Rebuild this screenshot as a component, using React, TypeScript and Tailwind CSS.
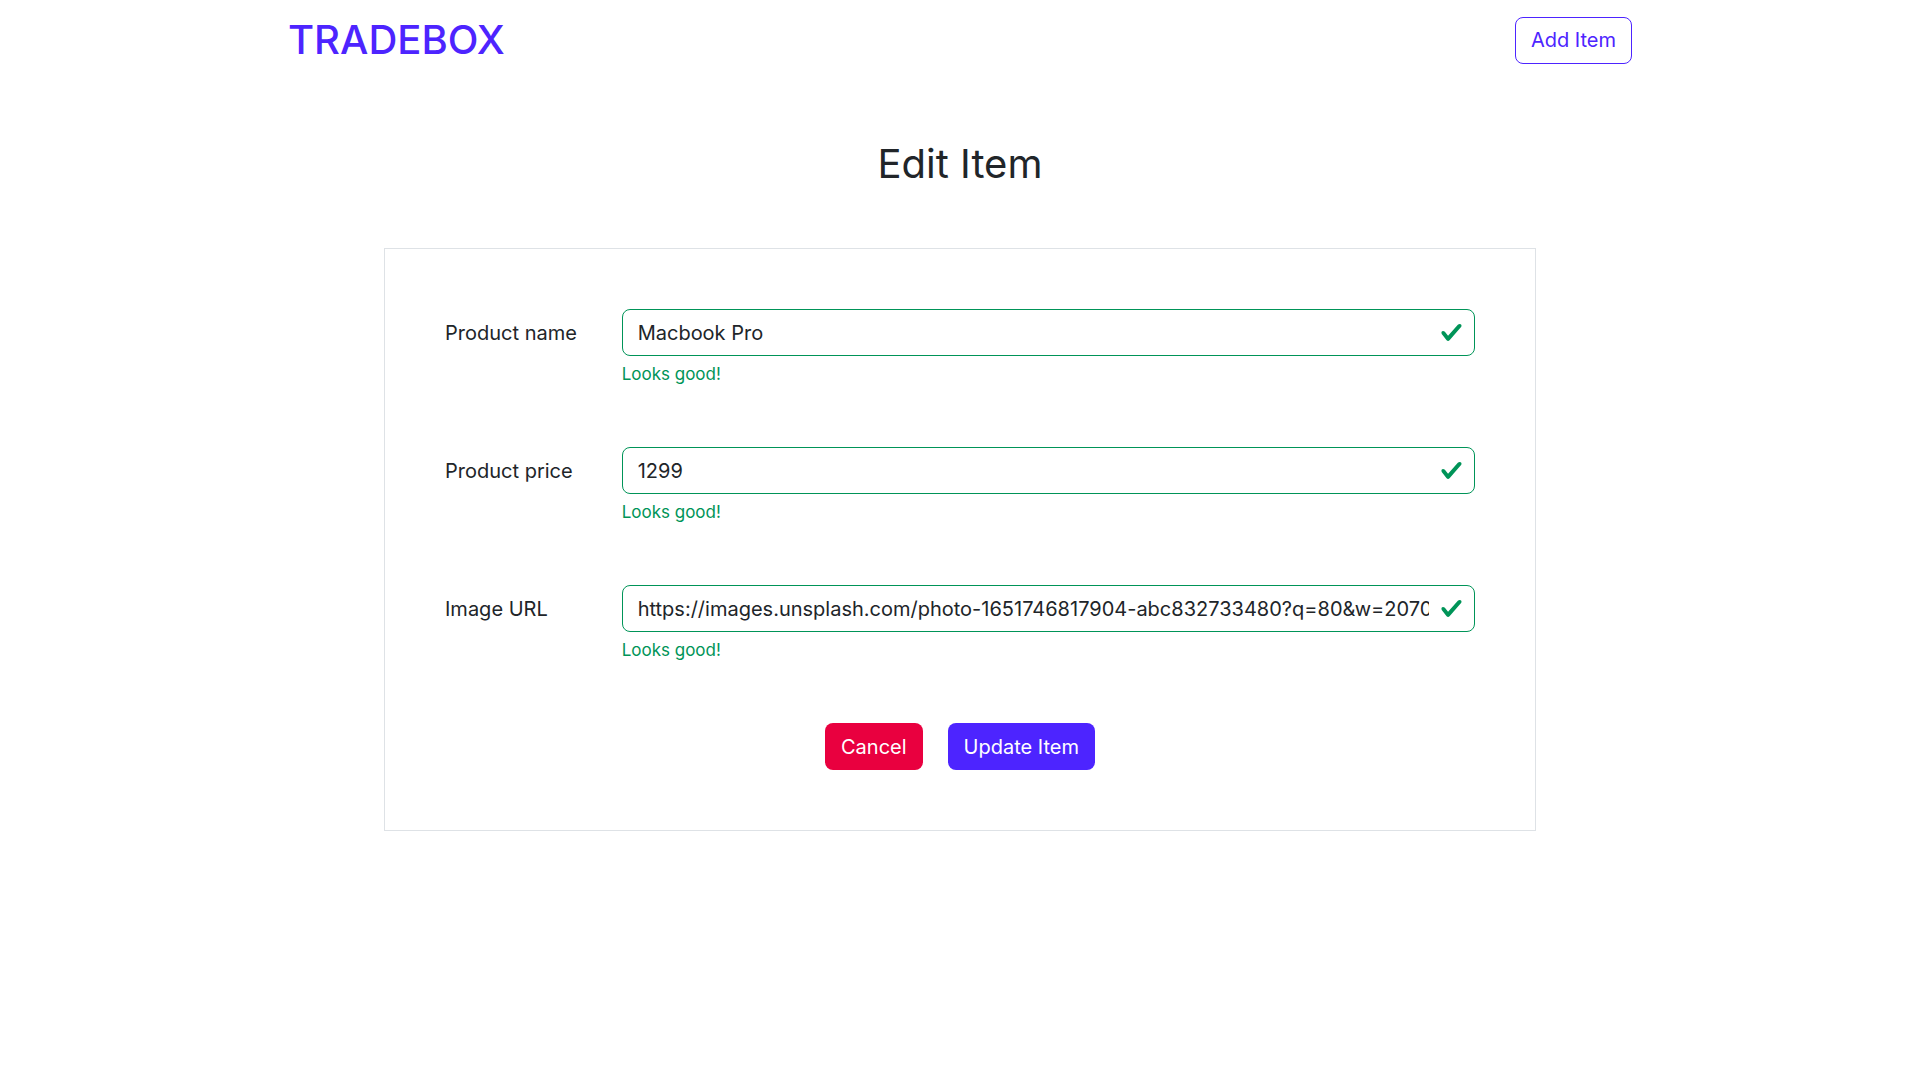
import { useState } from "react";

function ValidMark() {
  return (
    <svg
      viewBox="0 0 8 8"
      aria-hidden="true"
      className="pointer-events-none absolute top-3 right-3 size-[23px] fill-[#009458]"
    >
      <path d="M2.3 6.73.6 4.53c-.4-1.04.46-1.4 1.1-.8l1.1 1.4 3.4-3.8c.6-.63 1.6-.27 1.2.7l-4 4.6c-.43.5-.8.4-1.1.1z" />
    </svg>
  );
}

type FieldProps = { id: string; label: string; initial: string };

function Field({ id, label, initial }: FieldProps) {
  const [value, setValue] = useState(initial);
  return (
    <div className="-mx-[15px] mb-[60px] flex">
      <label htmlFor={id} className="w-1/6 px-[15px] py-[9px] leading-[30px]">
        {label}
      </label>
      <div className="w-5/6 px-[15px]">
        <div className="relative">
          <input
            id={id}
            type="text"
            value={value}
            onChange={(e) => setValue(e.target.value)}
            aria-describedby={id + "-feedback"}
            className="block h-[47px] w-full rounded-lg border border-[#009458] bg-white pr-[45px] pl-[15px] outline-none"
          />
          <ValidMark />
        </div>
        <p id={id + "-feedback"} className="mt-[5px] text-[17px] leading-[26px] text-[#009458]">
          Looks good!
        </p>
      </div>
    </div>
  );
}

export default function App() {
  return (
    <div className="min-h-screen bg-white font-['Inter',sans-serif] text-xl leading-[30px] text-[#212529]">
      <header className="mx-auto flex h-20 w-[70%] items-center justify-between">
        <a href="#" className="text-[40px] leading-[60px] font-medium text-[#4d24ff]">
          TRADEBOX
        </a>
        <a
          href="#add"
          className="rounded-lg border border-[#4d24ff] px-[15px] py-2 leading-[29px] text-[#4d24ff]"
        >
          Add Item
        </a>
      </header>
      <main className="mx-auto w-3/5">
        <h1 className="mt-[60px] mb-[60px] text-center text-[40px] leading-12">
          Edit Item
        </h1>
        <form
          className="border border-[#dee2e6] p-[60px]"
          onSubmit={(e) => e.preventDefault()}
        >
          <Field id="name" label="Product name" initial="Macbook Pro" />
          <Field id="price" label="Product price" initial="1299" />
          <Field
            id="image"
            label="Image URL"
            initial="https://images.unsplash.com/photo-1651746817904-abc832733480?q=80&w=2070&auto=format&fit=crop"
          />
          <div className="flex justify-center gap-[25px]">
            <button type="button" className="h-[47px] rounded-lg bg-[#e9003f] px-4 text-white">
              Cancel
            </button>
            <button type="submit" className="h-[47px] rounded-lg bg-[#4d24ff] px-4 text-white">
              Update Item
            </button>
          </div>
        </form>
      </main>
    </div>
  );
}
